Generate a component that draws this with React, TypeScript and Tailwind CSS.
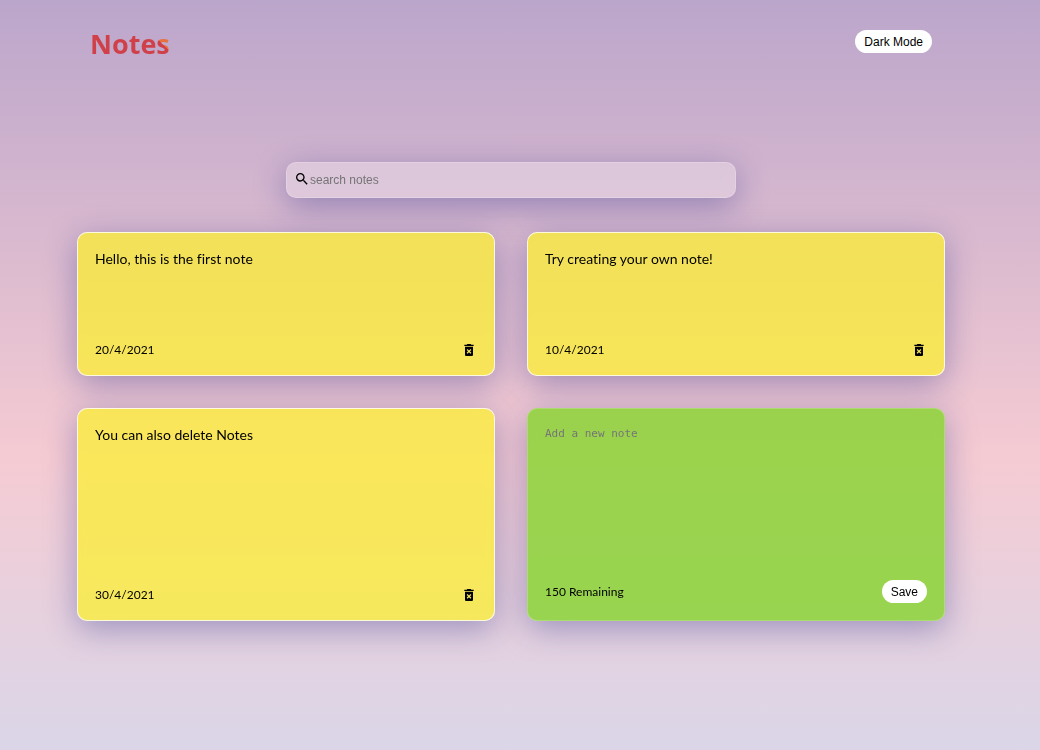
import { useState } from "react";
import { MdDeleteForever, MdSearch } from "react-icons/md";

interface Note {
  id: number;
  text: string;
  date: string;
}

const initialNotes: Note[] = [
  { id: 1, text: "Hello, this is the first note", date: "20/4/2021" },
  { id: 2, text: "Try creating your own note!", date: "10/4/2021" },
  { id: 3, text: "You can also delete Notes", date: "30/4/2021" },
];

const LIMIT = 150;

const glass =
  "rounded-[10px] border shadow-[0_8px_32px_0_rgba(31,38,135,0.37)] backdrop-blur-xs";

const pill =
  "cursor-pointer rounded-full bg-white px-[9px] pt-px font-['Liberation_Sans',sans-serif] text-[12px] leading-[22px] text-black";

function Header({ dark, onToggle }: { dark: boolean; onToggle: () => void }) {
  return (
    <header className="flex items-start justify-between px-[29px] pt-[21px]">
      <h1 className="bg-[linear-gradient(45deg,#d04048_76%,#e8703c_76%)] bg-clip-text font-['Open_Sans',sans-serif] text-[27px] leading-[46px] font-bold text-transparent">
        Notes
      </h1>
      <button type="button" onClick={onToggle} className={`${pill} mt-[9px]`}>
        {dark ? "Light Mode" : "Dark Mode"}
      </button>
    </header>
  );
}

function Search({ value, onChange }: { value: string; onChange: (v: string) => void }) {
  return (
    <label
      className={`${glass} mx-auto mt-[95px] flex h-9 w-1/2 items-center border-white/20 bg-white/25 px-[7px]`}
    >
      <MdSearch className="mb-0.5 size-4 shrink-0 text-black" aria-hidden="true" />
      <input
        type="text"
        aria-label="Search notes"
        placeholder="search notes"
        value={value}
        onChange={(e) => onChange(e.target.value)}
        className="min-w-0 flex-1 bg-transparent font-['Liberation_Sans',sans-serif] text-[12px] outline-none placeholder:text-[#757575]"
      />
    </label>
  );
}

function NoteCard({ note, onDelete }: { note: Note; onDelete: () => void }) {
  return (
    <article
      className={`${glass} flex min-h-36 flex-col justify-between border-white/80 bg-[#fcf226]/70 px-[17px] pt-4 pb-[15px]`}
    >
      <p className="text-[14px] leading-5 [font-variant-ligatures:none]">{note.text}</p>
      <footer className="flex items-center justify-between text-[12px] leading-5">
        <time>{note.date}</time>
        <button type="button" aria-label="Delete note" onClick={onDelete} className="cursor-pointer">
          <MdDeleteForever className="size-4" aria-hidden="true" />
        </button>
      </footer>
    </article>
  );
}

function AddNote({ onSave }: { onSave: (text: string) => void }) {
  const [text, setText] = useState("");
  const save = () => {
    if (text.trim()) {
      onSave(text);
      setText("");
    }
  };
  return (
    <section
      className={`${glass} flex flex-col justify-between border-white/20 bg-[#85d42c]/80 px-[17px] pt-4 pb-[17px]`}
    >
      <textarea
        aria-label="New note"
        rows={8}
        maxLength={LIMIT}
        placeholder="Add a new note"
        value={text}
        onChange={(e) => setText(e.target.value)}
        className="h-[155px] resize-none bg-transparent font-['DejaVu_Sans_Mono',monospace] text-[11px] leading-[18px] outline-none placeholder:text-[#757575]"
      />
      <footer className="flex items-center justify-between text-[12px] leading-5">
        <span>{LIMIT - text.length} Remaining</span>
        <button type="button" onClick={save} className={pill}>
          Save
        </button>
      </footer>
    </section>
  );
}

export default function App() {
  const [notes, setNotes] = useState(initialNotes);
  const [query, setQuery] = useState("");
  const [dark, setDark] = useState(false);

  const addNote = (text: string) =>
    setNotes([...notes, { id: Date.now(), text, date: new Date().toLocaleDateString("en-GB") }]);

  return (
    <div
      className={`min-h-screen pr-[18px] font-['Lato',sans-serif] text-black ${
        dark ? "bg-black" : "bg-[linear-gradient(to_bottom,#bba6cb_0%,#f5cbd3_61%,#dad6e8_100%)]"
      }`}
    >
      <main className="mx-auto max-w-[900px]">
        <Header dark={dark} onToggle={() => setDark(!dark)} />
        <Search value={query} onChange={setQuery} />
        <div className="mt-[34px] grid grid-cols-2 gap-8 px-4 pb-8">
          {notes
            .filter((n) => n.text.toLowerCase().includes(query.toLowerCase()))
            .map((n) => (
              <NoteCard
                key={n.id}
                note={n}
                onDelete={() => setNotes(notes.filter((m) => m.id !== n.id))}
              />
            ))}
          <AddNote onSave={addNote} />
        </div>
      </main>
    </div>
  );
}
